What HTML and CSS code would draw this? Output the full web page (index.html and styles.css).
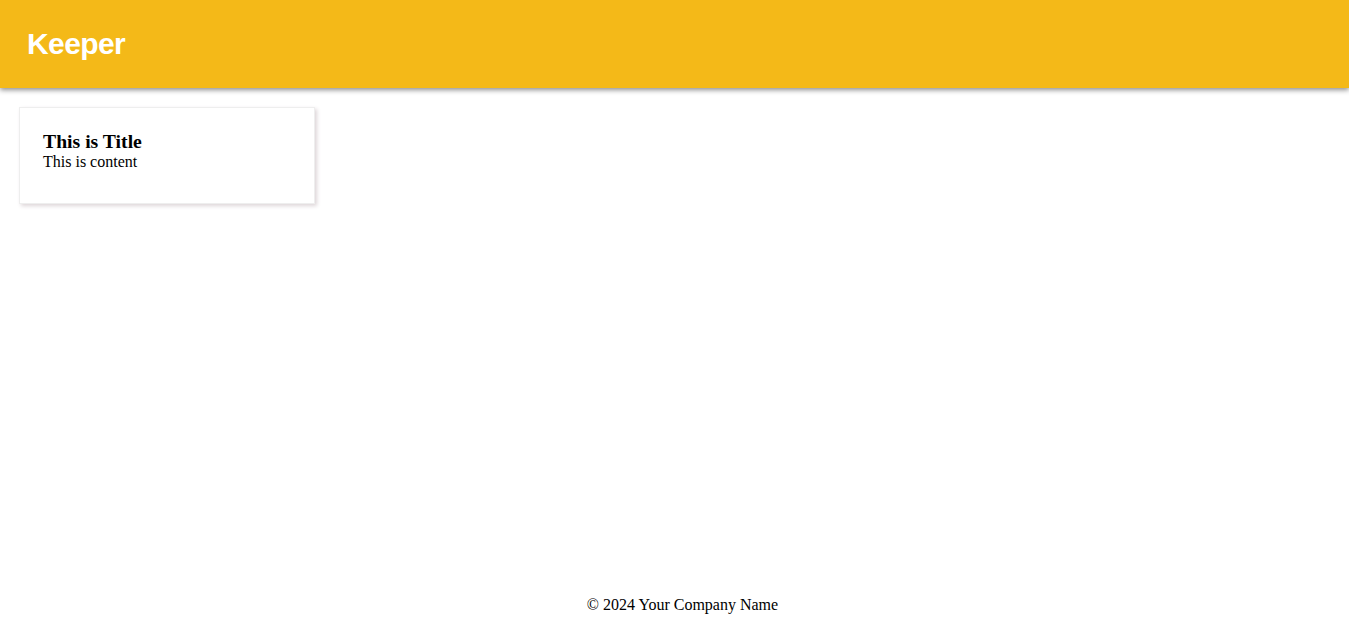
FILE: index.html
```html
<!DOCTYPE html>
<html>
<head>
<meta charset="utf-8">
<link rel="stylesheet" href="styles.css">
</head>
<body>
<header class="header"><h1 class="logo">Keeper</h1></header>
<main class="notes">
  <div class="note">
    <h3 class="note-title">This is Title</h3>
    <p class="note-content">This is content</p>
  </div>
</main>
<footer class="footer"><p>© 2024 Your Company Name</p></footer>
</body>
</html>
```
FILE: styles.css
```css
* { margin: 0; padding: 0; box-sizing: border-box; }
body {
  font-family: "Liberation Serif", "Times New Roman", serif;
  font-size: 16px;
  min-height: 100vh;
  display: flex;
  flex-direction: column;
  background: #fff;
}
.header {
  background: #f4b918;
  height: 88px;
  padding: 0 27px;
  display: flex;
  align-items: center;
  box-shadow: 0 2px 5px rgba(0,0,0,0.45);
}
.logo {
  color: #fff;
  font-family: "Liberation Sans", Arial, sans-serif;
  font-weight: bold;
  font-size: 30px;
  letter-spacing: -0.6px;
  margin-top: -1px;
}
.notes {
  padding: 19px 19px;
  display: flex;
}
.note {
  width: 296px;
  height: 97px;
  border: 1px solid #eee;
  background: #fff;
  box-shadow: 2px 2px 4px #ddd5d8;
  padding: 22px 23px;
}
.note-title {
  font-size: 19.7px;
  font-weight: bold;
  line-height: 22px;
}
.note-content {
  line-height: 18px;
  margin-top: 1px;
}
.footer {
  margin-top: auto;
  text-align: center;
  padding-bottom: 9px;
  padding-left: 16px;
}
.footer p { line-height: 18px; }
```
